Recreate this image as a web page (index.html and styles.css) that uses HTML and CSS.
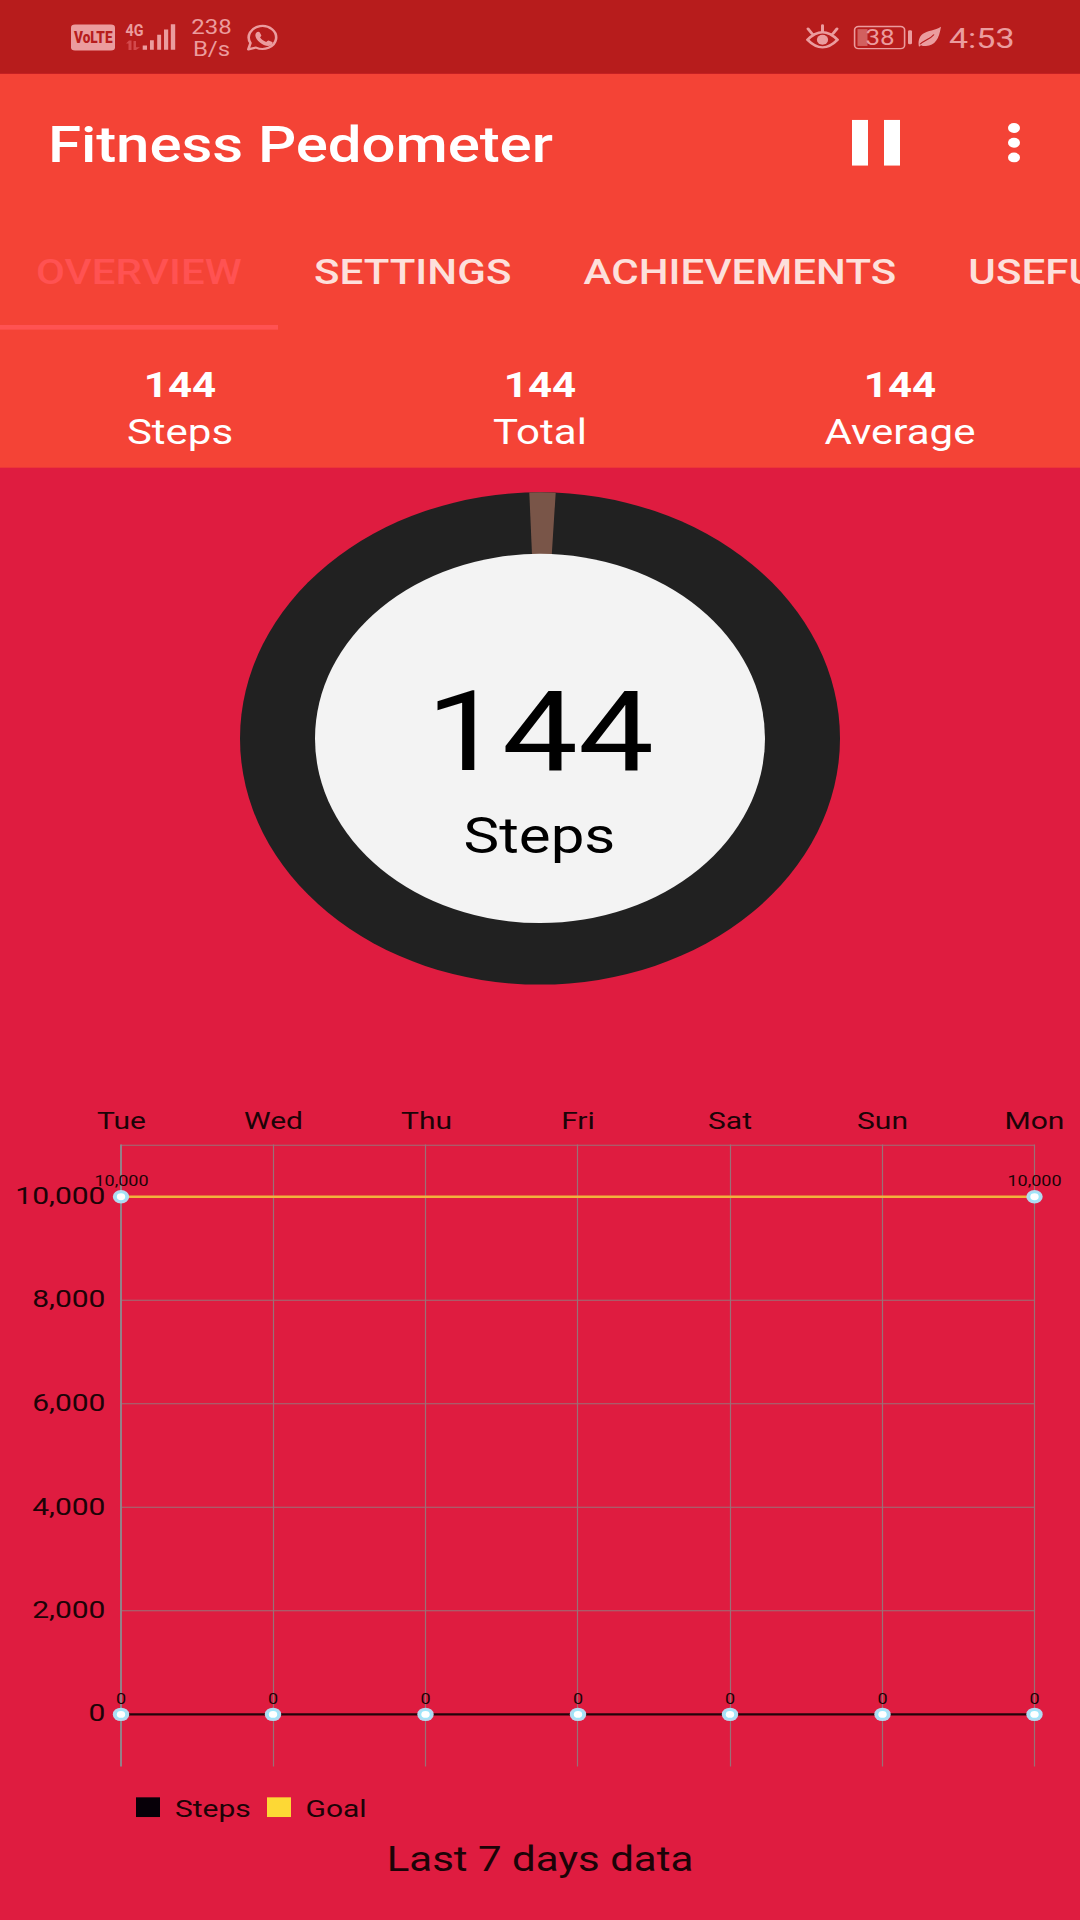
FILE: index.html
```html
<!DOCTYPE html>
<html lang="en">
<head>
<meta charset="utf-8">
<title>Fitness Pedometer</title>
<link rel="stylesheet" href="styles.css">
</head>
<body>
<div class="viewport">
<div class="screen">
  <div class="status-bar">
    <svg class="status-left" width="250" height="90" viewBox="0 0 250 90">
      <rect x="21" y="30" width="44" height="31.5" rx="4"/>
      <text class="volte" x="24" y="52.800" textLength="38.500" lengthAdjust="spacingAndGlyphs">VoLTE</text>
      <text class="net" x="75.5" y="44" textLength="18" lengthAdjust="spacingAndGlyphs">4G</text>
      <path class="dim" d="M76 53l3-3.500h2.500V61H78.500V53zM83.500 50H86v7.500h4L86 61h-2.500z"/>
      <path d="M92.700 55.500h4.300v5h-4.300zM100 49h3.800v11.500H100zM107.200 42.500h3.900v18h-3.900zM114 36h4.200v24.500H114zM120.800 29.500h4.400v31h-4.400z"/>
      <text class="speed" x="161.500" y="41" text-anchor="middle">238</text>
      <text class="speed" x="161.500" y="68" text-anchor="middle">B/s</text>
      <path class="line" d="M198.300 60.200L200.500 52.500A13.700 14 0 1 1 206 58z"/>
      <path d="M206.500 39.500c1.200-1.300 2.800-1 3.300.2l1.500 3.300c.2.700-.8 1.900-1.300 2.500 1.400 2.800 3.400 4.500 6.200 5.700.8-.7 1.700-2 2.400-1.800l3.600 1.900c.8.600.4 3.300-1.600 4.300-3.200 1.600-7.700-.7-11-4.100-3.200-3.400-5.900-8.600-3.100-12z"/>
    </svg>
    <svg class="status-right" width="250" height="90" viewBox="0 0 250 90">
      <path class="eye" d="M27.500 48.500Q42.500 30 57.500 48.500Q42.500 67 27.500 48.500zM42.500 38V31M32 41l-4-6M53 41l4-6"/>
      <ellipse cx="42.500" cy="48.500" rx="5.600" ry="6"/>
      <rect class="cell" x="74.600" y="32.300" width="50" height="27" rx="4"/>
      <rect class="charge" x="77.500" y="35.500" width="10" height="20.500"/>
      <rect x="128" y="37" width="4" height="17" rx="1.500"/>
      <text class="percent" x="100" y="54.500" text-anchor="middle">38</text>
      <path d="M161 32.500c-2 15-6 23-15 23.500-2 .1-4-.2-5-1l-2 2c-1-5-.5-12 4-16 5-4 12-4 18-8.500z"/>
      <path class="vein" d="M140 54c4-5 10-6 14-12"/>
      <text class="clock" x="169" y="58.500">4:53</text>
    </svg>
  </div>

  <div class="app-bar">
    <header class="toolbar">
      <h1 class="title">Fitness Pedometer</h1>
      <div class="actions">
        <svg width="48" height="56" viewBox="0 0 48 56"><path d="M0 0h16v56H0zM32 0h16v56H32z"/></svg>
        <svg width="12" height="48" viewBox="0 0 12 48"><circle cx="6" cy="6" r="6"/><circle cx="6" cy="24" r="6"/><circle cx="6" cy="42" r="6"/></svg>
      </div>
    </header>

    <nav class="tabs">
      <span class="tab active">OVERVIEW</span>
      <span class="tab">SETTINGS</span>
      <span class="tab">ACHIEVEMENTS</span>
      <span class="tab">USEFUL</span>
    </nav>

    <section class="stats">
      <div class="stat"><b>144</b><span>Steps</span></div>
      <div class="stat"><b>144</b><span>Total</span></div>
      <div class="stat"><b>144</b><span>Average</span></div>
    </section>
  </div>

  <section class="progress">
    <svg width="1080" height="740" viewBox="0 570 1080 740">
      <circle class="ring" cx="540" cy="900" r="300"/>
      <path class="slice" d="M540 900L529.300 600.200A300 300 0 0 1 555.700 600.400z"/>
      <circle class="hub" cx="540" cy="900" r="225"/>
      <text class="count" x="540" y="938" text-anchor="middle">144</text>
      <text class="unit" x="539.500" y="1039.500" text-anchor="middle">Steps</text>
    </svg>
  </section>

  <section class="history">
    <svg width="1080" height="1030" viewBox="0 1310 1080 1030">
      <defs>
        <g id="dot"><circle class="dot-ring" r="8.200"/><circle class="dot-glow" r="6"/><circle class="dot-hole" r="4.200"/></g>
      </defs>
      <g class="grid">
        <path d="M121 1395.700H1034.500M121 1458.500H1034.500M121 1584.700H1034.500M121 1710.900H1034.500M121 1837H1034.500M121 1963.200H1034.500M121 2089.400H1034.500"/>
        <path d="M273.500 1395V2153M425.500 1395V2153M577.500 1395V2153M730.500 1395V2153M882.500 1395V2153M1034.500 1395V2153"/>
        <path class="axis" d="M121 1395V2153"/>
      </g>
      <g class="label" text-anchor="middle">
        <text x="121.500" y="1376">Tue</text><text x="273.500" y="1376">Wed</text><text x="426.500" y="1376">Thu</text><text x="578" y="1376">Fri</text><text x="730" y="1376">Sat</text><text x="882.500" y="1376">Sun</text><text x="1034.500" y="1376">Mon</text>
      </g>
      <g class="label" text-anchor="end">
        <text x="105.500" y="1467.300">10,000</text><text x="105.500" y="1593.500">8,000</text><text x="105.500" y="1719.700">6,000</text><text x="105.500" y="1845.800">4,000</text><text x="105.500" y="1972">2,000</text><text x="105.500" y="2098">0</text>
      </g>
      <path class="goal-line" d="M121 1458.500H1034.500"/>
      <path class="steps-line" d="M121 2089.400H1034.500"/>
      <g class="value" text-anchor="middle">
        <text x="121.500" y="1445">10,000</text><text x="1034.500" y="1445">10,000</text>
        <text x="121" y="2077">0</text><text x="273" y="2077">0</text><text x="425.500" y="2077">0</text><text x="578" y="2077">0</text><text x="730" y="2077">0</text><text x="882.500" y="2077">0</text><text x="1034.500" y="2077">0</text>
      </g>
      <use href="#dot" x="121" y="1458.500"/><use href="#dot" x="1034.500" y="1458.500"/>
      <use href="#dot" x="121" y="2089.400"/><use href="#dot" x="273" y="2089.400"/><use href="#dot" x="425.500" y="2089.400"/><use href="#dot" x="578" y="2089.400"/><use href="#dot" x="730" y="2089.400"/><use href="#dot" x="882.500" y="2089.400"/><use href="#dot" x="1034.500" y="2089.400"/>
      <rect class="key-steps" x="136" y="2190.500" width="24" height="24"/>
      <text class="label" x="175" y="2214">Steps</text>
      <rect class="key-goal" x="267" y="2190.500" width="24" height="24"/>
      <text class="label" x="305.500" y="2214">Goal</text>
      <text class="caption" x="540" y="2280" text-anchor="middle">Last 7 days data</text>
    </svg>
  </section>
</div>
</div>
</body>
</html>
```
FILE: styles.css
```css
body {
  margin: 0;
}

.viewport {
  width: 1080px;
  height: 1920px;
  overflow: hidden;
}

/* A 1080 x 2340 phone layout, fitted to a 1920px tall viewport. */
.screen {
  display: flex;
  flex-direction: column;
  width: 1080px;
  height: 2340px;
  transform: scaleY(0.820513);
  transform-origin: 0 0;
  background: #df1c40;
  color: #fff;
  font-family: Roboto, "Liberation Sans", sans-serif;
}

svg {
  display: block;
}

.status-bar {
  display: flex;
  justify-content: space-between;
  flex: none;
  height: 90px;
  padding: 0 50px;
  background: #b71c1c;
  fill: #eb9c9e;
}

.volte { font-size: 19px; font-weight: 900; fill: #b71c1c; }
.net { font-size: 20.5px; font-weight: 700; }
.dim { fill: #d3494c; }
.speed { font-size: 24px; }
.line { fill: none; stroke: #eb9c9e; stroke-width: 2.6; stroke-linejoin: round; }
.eye { fill: none; stroke: #eb9c9e; stroke-width: 3; stroke-linecap: round; stroke-linejoin: round; }
.cell { fill: none; stroke: #eb9c9e; stroke-width: 1.6; }
.charge { fill: #d2605f; }
.percent { font-size: 26px; }
.vein { fill: none; stroke: #b71c1c; stroke-width: 1.2; }
.clock { font-size: 34px; }

.app-bar {
  flex: none;
  background: #f44336;
}

.toolbar {
  display: flex;
  align-items: center;
  justify-content: space-between;
  box-sizing: border-box;
  height: 168px;
  padding: 0 60px 0 48px;
  fill: #fff;
}

.title {
  margin: 6px 0 0;
  font-size: 60px;
  font-weight: 500;
  line-height: 70px;
  letter-spacing: -0.08px;
}

.actions {
  display: flex;
  align-items: center;
  gap: 108px;
}

.tabs {
  display: flex;
  height: 144px;
  overflow: hidden;
}

.tab {
  flex: none;
  box-sizing: border-box;
  height: 144px;
  padding: 2px 36px 0;
  font-size: 42px;
  font-weight: 500;
  line-height: 144px;
  letter-spacing: 0.1px;
  color: #fde0dc;
}

.tab.active {
  border-bottom: 6px solid #ff5252;
  color: #ff5252;
}

.stats {
  display: grid;
  grid-template-columns: repeat(3, 1fr);
  box-sizing: border-box;
  height: 168px;
  padding-top: 39px;
  font-size: 42px;
  line-height: 57px;
  text-align: center;
}

.stat {
  display: flex;
  flex-direction: column;
}

.ring { fill: #212121; }
.slice { fill: #795548; }
.hub { fill: #f3f3f3; }
.count { font-size: 135px; fill: #000; }
.unit { font-size: 60px; fill: #000; }

.grid { fill: none; stroke: #9a7077; stroke-width: 1.2; }
.grid .axis { stroke: #948088; stroke-width: 2; }
.label { font-size: 30px; fill: #1c0307; }
.value { font-size: 18px; fill: #1c0307; }
.goal-line { stroke: #f3b23c; stroke-width: 3; }
.steps-line { stroke: #22040b; stroke-width: 3; }
.dot-ring { fill: #b5d9ee; }
.dot-glow { fill: #9be6fa; }
.dot-hole { fill: #fff; }
.key-steps { fill: #070008; }
.key-goal { fill: #fdd835; }
.caption { font-size: 42px; fill: #1c0307; }
```
